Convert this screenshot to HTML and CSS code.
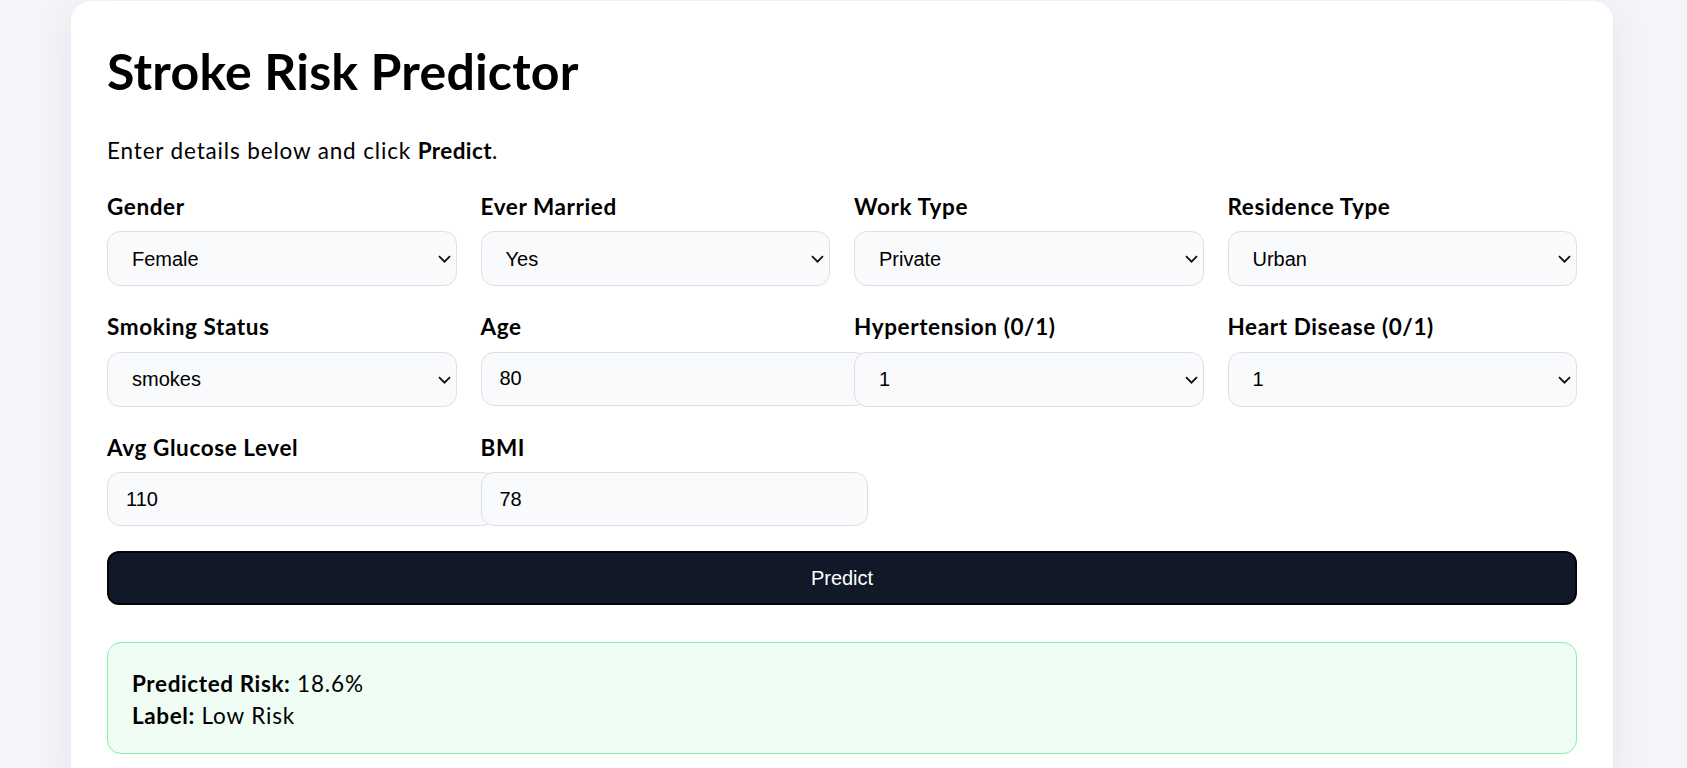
FILE: index.html
```html
<!DOCTYPE html>
<html lang="en">
<head>
<meta charset="utf-8">
<title>Stroke Risk Predictor</title>
<link rel="stylesheet" href="styles.css">
</head>
<body>
<main class="card">
  <h1 class="title">Stroke Risk Predictor</h1>
  <p class="intro">Enter details below and click <strong>Predict</strong>.</p>
  <form class="form">
    <div class="grid">
      <div class="field">
        <label class="label">Gender</label>
        <div class="select-wrap">
          <select class="select"><option>Female</option><option>Male</option></select>
          <svg class="chev" width="13" height="8" viewBox="0 0 13 8"><path d="M1 1.2 L6.5 6.7 L12 1.2" fill="none" stroke="#111" stroke-width="1.8"/></svg>
        </div>
      </div>
      <div class="field">
        <label class="label">Ever Married</label>
        <div class="select-wrap">
          <select class="select"><option>Yes</option><option>No</option></select>
          <svg class="chev" width="13" height="8" viewBox="0 0 13 8"><path d="M1 1.2 L6.5 6.7 L12 1.2" fill="none" stroke="#111" stroke-width="1.8"/></svg>
        </div>
      </div>
      <div class="field">
        <label class="label">Work Type</label>
        <div class="select-wrap">
          <select class="select"><option>Private</option></select>
          <svg class="chev" width="13" height="8" viewBox="0 0 13 8"><path d="M1 1.2 L6.5 6.7 L12 1.2" fill="none" stroke="#111" stroke-width="1.8"/></svg>
        </div>
      </div>
      <div class="field">
        <label class="label">Residence Type</label>
        <div class="select-wrap">
          <select class="select"><option>Urban</option><option>Rural</option></select>
          <svg class="chev" width="13" height="8" viewBox="0 0 13 8"><path d="M1 1.2 L6.5 6.7 L12 1.2" fill="none" stroke="#111" stroke-width="1.8"/></svg>
        </div>
      </div>
      <div class="field">
        <label class="label">Smoking Status</label>
        <div class="select-wrap">
          <select class="select"><option>smokes</option></select>
          <svg class="chev" width="13" height="8" viewBox="0 0 13 8"><path d="M1 1.2 L6.5 6.7 L12 1.2" fill="none" stroke="#111" stroke-width="1.8"/></svg>
        </div>
      </div>
      <div class="field">
        <label class="label">Age</label>
        <input class="input" type="number" value="80">
      </div>
      <div class="field">
        <label class="label">Hypertension (0/1)</label>
        <div class="select-wrap">
          <select class="select"><option>1</option><option>0</option></select>
          <svg class="chev" width="13" height="8" viewBox="0 0 13 8"><path d="M1 1.2 L6.5 6.7 L12 1.2" fill="none" stroke="#111" stroke-width="1.8"/></svg>
        </div>
      </div>
      <div class="field">
        <label class="label">Heart Disease (0/1)</label>
        <div class="select-wrap">
          <select class="select"><option>1</option><option>0</option></select>
          <svg class="chev" width="13" height="8" viewBox="0 0 13 8"><path d="M1 1.2 L6.5 6.7 L12 1.2" fill="none" stroke="#111" stroke-width="1.8"/></svg>
        </div>
      </div>
      <div class="field">
        <label class="label">Avg Glucose Level</label>
        <input class="input" type="number" value="110">
      </div>
      <div class="field">
        <label class="label">BMI</label>
        <input class="input" type="number" value="78">
      </div>
    </div>
    <button class="btn" type="button">Predict</button>
  </form>
  <div class="result">
    <div><strong>Predicted Risk:</strong> 18.6%</div>
    <div><strong>Label:</strong> Low Risk</div>
  </div>
</main>
</body>
</html>
```
FILE: styles.css
```css
html, body {
  margin: 0;
  padding: 0;
}
body {
  background: #f4f5f9;
  font-family: "Lato", "Open Sans", sans-serif;
  color: #000;
  padding: 1px 3px 0 0;
  overflow: hidden;
}
.card {
  box-sizing: border-box;
  width: 1542px;
  margin: 0 auto;
  background: #fff;
  border-radius: 20px;
  padding: 36px 36px 36px;
  box-shadow: 0 8px 40px rgba(17, 24, 39, 0.07);
}
.title {
  margin: 4px 0 0;
  font-size: 50px;
  line-height: 60px;
  font-weight: 700;
  letter-spacing: 0.2px;
}
.intro {
  margin: 34px 0 0;
  font-size: 22.5px;
  line-height: 31.5px;
  letter-spacing: 0.85px;
}
.intro strong { font-weight: 700; letter-spacing: 0.4px; }
.grid {
  margin-top: 24px;
  display: grid;
  grid-template-columns: repeat(4, 1fr);
  column-gap: 24px;
  row-gap: 25px;
}
.field {
  display: flex;
  flex-direction: column;
  align-items: flex-start;
  min-width: 0;
}
.label {
  display: block;
  font-size: 22.5px;
  line-height: 31.5px;
  font-weight: 700;
  letter-spacing: 0.6px;
  margin-bottom: 9px;
}
.select-wrap {
  position: relative;
  width: 100%;
}
.select {
  -webkit-appearance: none;
  appearance: none;
  display: block;
  box-sizing: border-box;
  width: 100%;
  height: 55px;
  margin: 0;
  padding: 0 30px 0 24px;
  border: 1px solid #dcdfe6;
  border-radius: 13px;
  background-color: #f9fafc;
  font-family: "Liberation Sans", Arial, sans-serif;
  font-size: 20px;
  color: #000;
}
.chev {
  position: absolute;
  right: 6px;
  top: 24px;
  pointer-events: none;
}
.input {
  box-sizing: content-box;
  width: 100%;
  height: 52px;
  padding: 0 18px;
  border: 1px solid #dcdfe6;
  border-radius: 13px;
  background: #f9fafc;
  font-family: "Liberation Sans", Arial, sans-serif;
  font-size: 20px;
  color: #000;
  margin: 0;
}
.btn {
  display: block;
  box-sizing: border-box;
  width: 100%;
  height: 54px;
  margin-top: 25px;
  background: #111827;
  color: #fff;
  border: 2px solid #050505;
  border-radius: 12px;
  font-family: "Liberation Sans", Arial, sans-serif;
  font-size: 20px;
}
.result {
  margin-top: 37px;
  border: 1px solid #86efac;
  background: #f0fdf4;
  border-radius: 14px;
  padding: 25px 24px 22px;
  font-size: 22.5px;
  line-height: 31.5px;
  letter-spacing: 0.85px;
}
.result strong { font-weight: 700; letter-spacing: 0.6px; }
```
